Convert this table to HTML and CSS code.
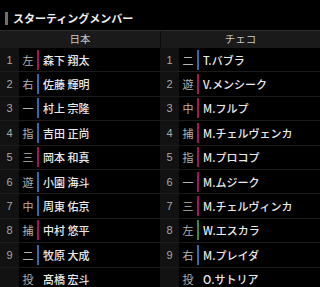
FILE: index.html
```html
<!DOCTYPE html>
<html lang="ja">
<head>
<meta charset="utf-8">
<link rel="stylesheet" href="styles.css">
</head>
<body>
<div class="title"><span class="title-bar"></span><span class="title-text">スターティングメンバー</span></div>
<div class="lineup">
  <div class="head">
    <div class="head-cell">日本</div>
    <div class="head-cell">チェコ</div>
  </div>
  <div class="row">
    <div class="cell"><span class="num">1</span><span class="pos">左</span><span class="hand r"></span><span class="name">森下 翔太</span></div>
    <div class="cell"><span class="num">1</span><span class="pos">二</span><span class="hand l"></span><span class="name">T.バブラ</span></div>
  </div>
  <div class="row">
    <div class="cell"><span class="num">2</span><span class="pos">右</span><span class="hand l"></span><span class="name">佐藤 輝明</span></div>
    <div class="cell"><span class="num">2</span><span class="pos">遊</span><span class="hand r"></span><span class="name">V.メンシーク</span></div>
  </div>
  <div class="row">
    <div class="cell"><span class="num">3</span><span class="pos">一</span><span class="hand l"></span><span class="name">村上 宗隆</span></div>
    <div class="cell"><span class="num">3</span><span class="pos">中</span><span class="hand r"></span><span class="name">M.フルプ</span></div>
  </div>
  <div class="row">
    <div class="cell"><span class="num">4</span><span class="pos">指</span><span class="hand l"></span><span class="name">吉田 正尚</span></div>
    <div class="cell"><span class="num">4</span><span class="pos">捕</span><span class="hand r"></span><span class="name">M.チェルヴェンカ</span></div>
  </div>
  <div class="row">
    <div class="cell"><span class="num">5</span><span class="pos">三</span><span class="hand r"></span><span class="name">岡本 和真</span></div>
    <div class="cell"><span class="num">5</span><span class="pos">指</span><span class="hand r"></span><span class="name">M.プロコプ</span></div>
  </div>
  <div class="row">
    <div class="cell"><span class="num">6</span><span class="pos">遊</span><span class="hand l"></span><span class="name">小園 海斗</span></div>
    <div class="cell"><span class="num">6</span><span class="pos">一</span><span class="hand r"></span><span class="name">M.ムジーク</span></div>
  </div>
  <div class="row">
    <div class="cell"><span class="num">7</span><span class="pos">中</span><span class="hand l"></span><span class="name">周東 佑京</span></div>
    <div class="cell"><span class="num">7</span><span class="pos">三</span><span class="hand r"></span><span class="name">M.チェルヴィンカ</span></div>
  </div>
  <div class="row">
    <div class="cell"><span class="num">8</span><span class="pos">捕</span><span class="hand r"></span><span class="name">中村 悠平</span></div>
    <div class="cell"><span class="num">8</span><span class="pos">左</span><span class="hand s"></span><span class="name">W.エスカラ</span></div>
  </div>
  <div class="row">
    <div class="cell"><span class="num">9</span><span class="pos">二</span><span class="hand l"></span><span class="name">牧原 大成</span></div>
    <div class="cell"><span class="num">9</span><span class="pos">右</span><span class="hand l"></span><span class="name">M.プレイダ</span></div>
  </div>
  <div class="row">
    <div class="cell"><span class="num"></span><span class="pos">投</span><span class="hand none"></span><span class="name">髙橋 宏斗</span></div>
    <div class="cell"><span class="num"></span><span class="pos">投</span><span class="hand none"></span><span class="name">O.サトリア</span></div>
  </div>
</div>
</body>
</html>
```
FILE: styles.css
```css
html, body {
  margin: 0;
  padding: 0;
  background: #000;
}
body {
  width: 320px;
  height: 287px;
  overflow: hidden;
  font-family: "Noto Sans CJK JP", "Noto Sans", sans-serif;
  color: #eee;
}
.title {
  display: flex;
  align-items: center;
  height: 13px;
  margin-top: 12px;
  padding-left: 5px;
}
.title-bar {
  width: 3px;
  height: 13px;
  background: #6f6f6f;
  margin-right: 5px;
}
.title-text {
  font-size: 11px;
  font-weight: bold;
  color: #eee;
  line-height: 13px;
}
.lineup {
  margin-top: 5px;
}
.head {
  display: grid;
  grid-template-columns: 160px 160px;
  border-top: 1px solid #2c2c2c;
  background: #1a1a1a;
  height: 17px;
}
.head-cell {
  font-size: 10.5px;
  color: #c8c8c8;
  text-align: center;
  line-height: 16px;
}
.head-cell + .head-cell {
  border-left: 1px solid #0c0c0c;
}
.row {
  display: grid;
  grid-template-columns: 160px 160px;
  height: 24.4px;
  box-sizing: border-box;
  border-bottom: 1px solid #1c1c1c;
}
.cell {
  display: flex;
  align-items: center;
}
.num {
  width: 19px;
  align-self: stretch;
  background: #121212;
  color: #a8a8a8;
  font-size: 11px;
  display: flex;
  align-items: center;
  justify-content: center;
  font-family: "Liberation Sans", sans-serif;
}
.pos {
  width: 18px;
  text-align: center;
  font-size: 11px;
  color: #b4b4b4;
}
.hand {
  width: 2px;
  height: 20px;
  margin-right: 4px;
}
.hand.r { background: #a3155e; }
.hand.l { background: #2e6cb0; }
.hand.s { background: #3a8a3e; }
.hand.none { background: transparent; }
.name {
  font-size: 11px;
  font-weight: 500;
  color: #eaeaea;
  white-space: nowrap;
}
```
